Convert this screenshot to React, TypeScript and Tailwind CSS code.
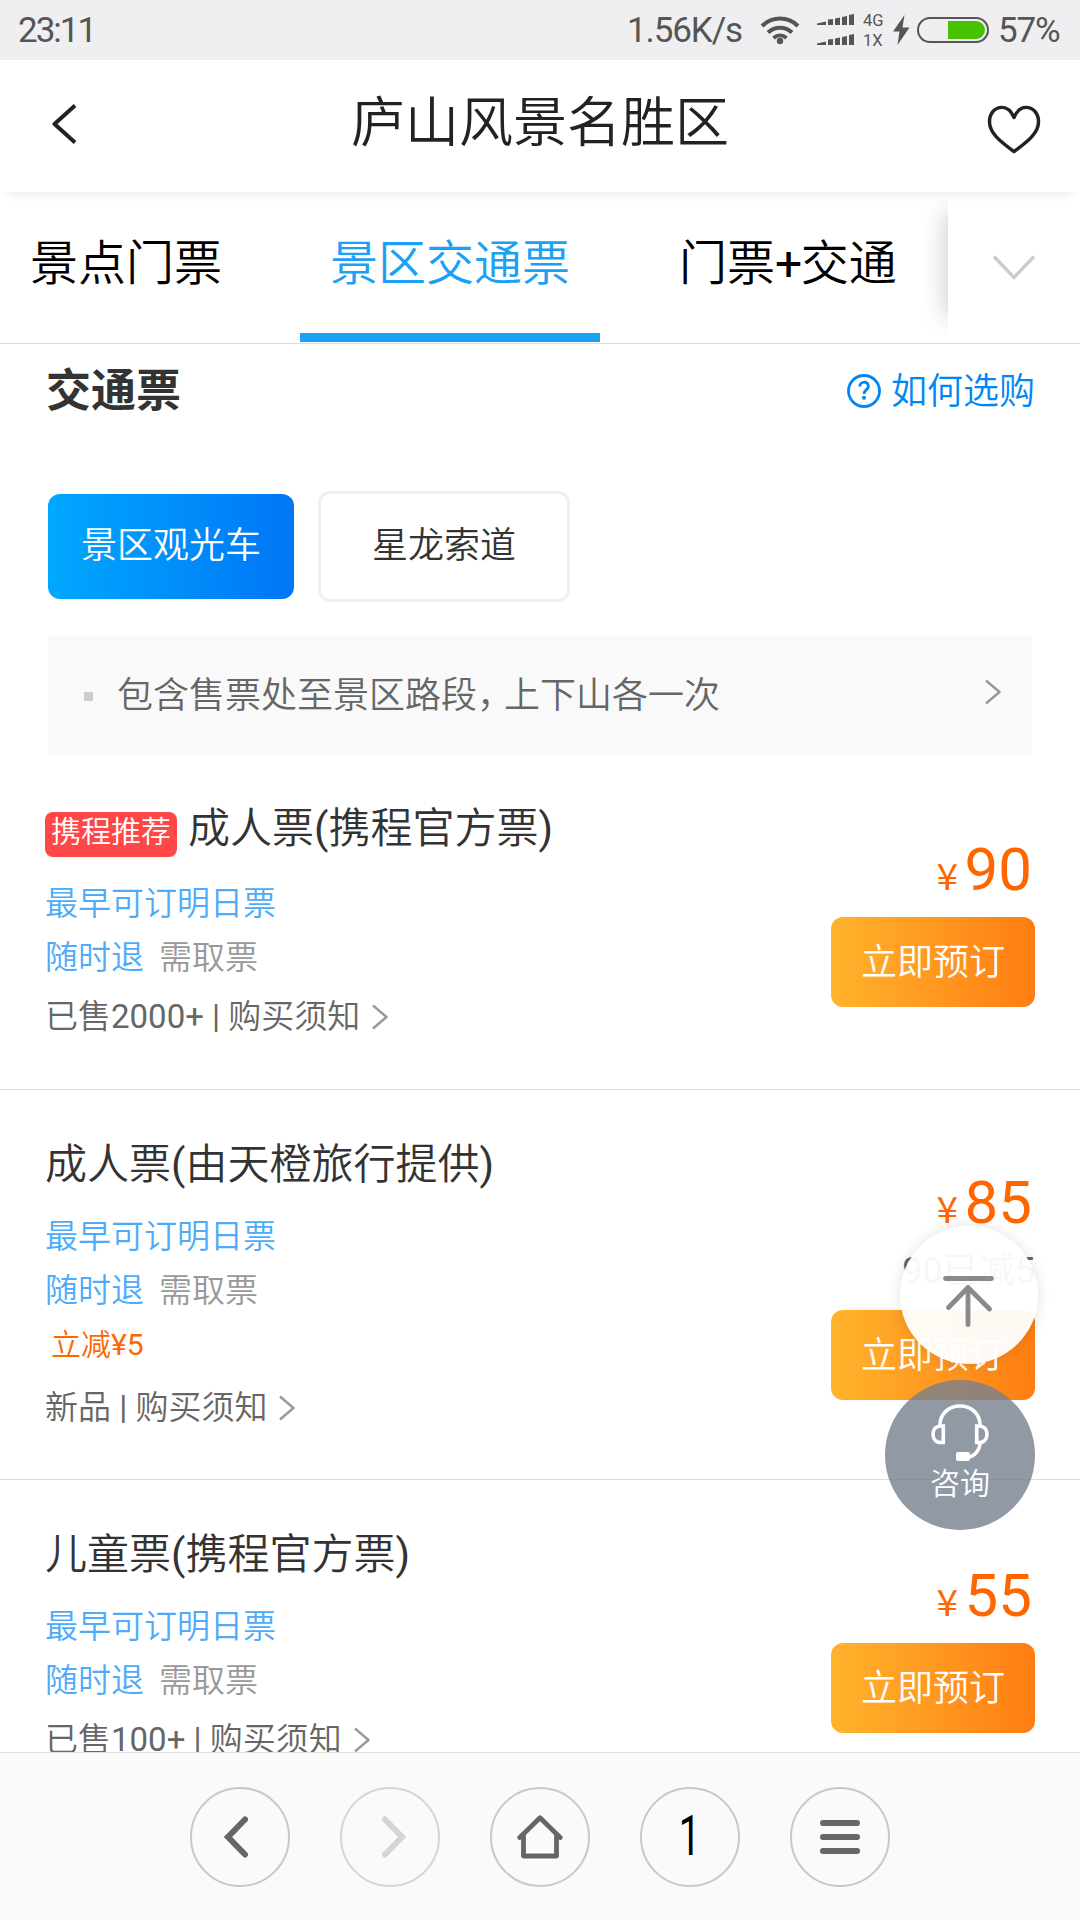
import clsx from 'clsx'

type Ticket = {
  title: string
  /** Red label in front of the title. */
  badge?: string
  sold: string
  price: number
  /** Small orange promo line. */
  promo?: string
  /** Grey line between the price and the button. */
  saved?: string
  priceClass: string
}

const TICKETS: Ticket[] = [
  { title: '成人票(携程官方票)', badge: '携程推荐', sold: '已售2000+', price: 90, priceClass: 'pt-[78px]' },
  { title: '成人票(由天橙旅行提供)', sold: '新品', price: 85, promo: '立减¥5', saved: '90已减5', priceClass: 'pt-[77px]' },
  { title: '儿童票(携程官方票)', sold: '已售100+', price: 55, priceClass: 'pt-[80px]' },
]

/* Latin runs at regular weight, Chinese stays at the inherited lighter one */
function Mixed({ text }: { text: string }) {
  return (
    <span className="whitespace-pre">
      {text.split(/([\x20-\xff]+)/).map((part, i) =>
        i % 2 ? (
          <span key={i} className="font-normal">
            {part}
          </span>
        ) : (
          part
        ),
      )}
    </span>
  )
}

function Signal() {
  return (
    <svg width="38" height="12" viewBox="0 0 38 12" fill="#555" aria-hidden="true">
      <path d="M0 11V9.5L9 7.5V11Z M11 11V5.5L16 5V11Z M18 11V4.5L23 3.5V11Z M25 11V3L30 2V11Z M32 11V1L37 0V11Z" />
    </svg>
  )
}

function StatusBar() {
  return (
    <div className="flex h-[60px] shrink-0 items-center bg-[#efeff1] pl-[18px] pr-[18px] text-[35px] leading-none text-[#555]">
      <span className="w-[76px] whitespace-nowrap pt-px tracking-[-2px]">23:11</span>
      <span className="ml-auto whitespace-nowrap pt-px tracking-[-1.1px]">1.56K/s</span>
      <svg className="ml-[18px]" width="40" height="30" viewBox="0 0 40 30" fill="none" stroke="#555" strokeWidth="4" aria-hidden="true">
        <path d="M2 11C12 1 28 1 38 11" />
        <path d="M8 17.5C15 11 25 11 32 17.5" />
        <path d="M13.5 23C17.5 19.5 22.5 19.5 26.5 23" />
        <circle cx="20" cy="26" r="3.2" fill="#555" stroke="none" />
      </svg>
      <div className="ml-[17px] flex flex-col gap-2">
        <Signal />
        <Signal />
      </div>
      <div className="ml-2 mt-px flex w-[24px] flex-col gap-1 text-[16.5px] leading-4">
        <span>4G</span>
        <span>1X</span>
      </div>
      <svg className="ml-[6px]" width="17" height="30" viewBox="0 0 17 30" fill="#555" aria-hidden="true">
        <path d="M11.5 0L0 16.5H6.5L4.5 30L16.5 12.5H9.5Z" />
      </svg>
      <div className="ml-[7px] flex h-[26px] w-[72px] justify-end rounded-full border-2 border-[#555] p-[2px]">
        <div className="h-[18px] w-[37px] rounded-r-full bg-[#47c200]" />
      </div>
      <span className="ml-[9px] w-[64px] whitespace-nowrap pt-px tracking-[-1.2px]">57%</span>
    </div>
  )
}

function Header() {
  return (
    <header className="relative z-10 flex h-[132px] shrink-0 items-center justify-between bg-white pl-[52px] pr-[39px] shadow-[0_6px_10px_-6px_rgba(0,0,0,0.12)]">
      <svg className="-mt-1 w-[54px]" width="54" height="42" viewBox="0 0 54 42" fill="none" stroke="#222" strokeWidth="4" aria-hidden="true">
        <path d="M23 2.5L2.5 21L23 39.5" strokeLinejoin="round" />
      </svg>
      <h1 className="-ml-[13px] -mt-1 text-[54px] font-[350] leading-none text-[#222]">庐山风景名胜区</h1>
      <svg className="mt-[5px]" width="54" height="50" viewBox="0 0 56 52" fill="none" stroke="#222" strokeWidth="3.6" strokeLinejoin="round" aria-hidden="true">
        <path d="M28 14C24.5 6 20 3.5 15.5 3.5C7.5 3.5 2.5 10.5 2.5 18.5C2.5 30 13 38.5 28 49.5C43 38.5 53.5 30 53.5 18.5C53.5 10.5 48.5 3.5 40.5 3.5C36 3.5 31.5 6 28 14Z" />
      </svg>
    </header>
  )
}

function Tabs() {
  return (
    <nav className="flex h-[152px] shrink-0 overflow-hidden border-b border-[#ddd] bg-white text-[48px] font-[350] leading-[143px] text-black">
      <div className="w-[300px] pl-[30px]">景点门票</div>
      <div className="w-[300px] border-b-[9px] border-[#1aa0f4] text-center text-[#1aa0f4] mb-px">景区交通票</div>
      <div className="w-[348px] whitespace-nowrap pl-[79px]">
        门票<span className="font-normal tracking-[-1.5px]">+</span>交通
      </div>
      <div className="relative my-2 flex flex-1 items-center justify-center bg-white">
        <div className="absolute inset-y-0 right-full w-[40px] overflow-hidden">
          <div className="absolute left-full top-[12px] h-[104px] w-10 shadow-[0_0_28px_rgba(0,0,0,0.24)]" />
        </div>
        <svg width="42" height="26" viewBox="0 0 42 26" fill="none" stroke="#ccc" strokeWidth="3.4" aria-hidden="true">
          <path d="M1 1.5L21 22.5L41 1.5" />
        </svg>
      </div>
    </nav>
  )
}

function Arrow({ className }: { className?: string }) {
  return (
    <svg className={className} width="16" height="26" viewBox="0 0 16 26" fill="none" stroke="#999" strokeWidth="2.4" aria-hidden="true">
      <path d="M1 1.5L14.5 13L1 24.5" strokeLinejoin="round" />
    </svg>
  )
}

function Intro() {
  return (
    <section className="h-[412px] shrink-0 px-[46px] font-[350]">
      <div className="flex h-[94px] items-center justify-between">
        <h2 className="pt-px text-[45px] font-bold leading-none text-[#333]">交通票</h2>
        <div className="flex items-center gap-[10px] pt-0.5 text-[36px] leading-none text-[#0086f6]">
          <svg className="-mt-0.5" width="34" height="34" viewBox="0 0 34 34" fill="none" stroke="currentColor" strokeWidth="2.8" aria-hidden="true">
            <circle cx="17" cy="17" r="15.5" />
            <path d="M12.8 12.5C13 6.8 21.4 6.8 21.4 12.2C21.4 15.8 17 15.5 17 20" strokeWidth="2.8" />
            <circle cx="17" cy="23.8" r="2" fill="currentColor" stroke="none" />
          </svg>
          <span className="-mr-px">如何选购</span>
        </div>
      </div>
      <div className="mt-[53px] flex items-center gap-6 pl-0.5 text-[36px] leading-none">
        <button className="h-[105px] w-[246px] rounded-xl bg-linear-to-r/srgb from-[#00a8ff] to-[#0076f5] pb-px text-white">景区观光车</button>
        <button className="h-[111px] w-[252px] rounded-xl border-3 border-[#f0f0f0] pb-px text-[#333]">星龙索道</button>
      </div>
      <div className="mx-0.5 mt-[33px] flex h-[120px] items-center bg-[#f9f9f9] pl-9 pr-[31px] text-[36px] leading-none text-[#666]">
        <span className="mt-[3px] size-[9px] bg-[#ccc]" />
        <p className="ml-6 whitespace-nowrap pt-px">
          包含售票处至景区路段<span className="tracking-[-9px]">，</span>上下山各一次
        </p>
        <Arrow className="-mt-[6px] ml-auto" />
      </div>
    </section>
  )
}

function TicketItem({ ticket }: { ticket: Ticket }) {
  return (
    <article className="flex shrink-0 justify-between border-b border-[#ddd] pl-[45px] pr-[45px] font-[350]">
      <div className={clsx('pt-11 text-[33px] leading-[54px]', ticket.promo ? 'pb-11' : 'pb-[45px]')}>
        <div className={clsx('flex items-center whitespace-nowrap', ticket.badge ? 'h-[61px]' : 'h-[60px]')}>
          {ticket.badge && (
            <span className="mr-[11px] mt-[7px] h-[45px] w-[132px] rounded-lg bg-[#ff4747] text-center text-[30px] leading-[40px] text-white">
              {ticket.badge}
            </span>
          )}
          <h3 className={clsx('text-[42px] leading-none text-[#333]', ticket.badge ? '-mt-1' : 'pt-px')}>
            <Mixed text={ticket.title} />
          </h3>
        </div>
        <p className="mt-4 text-[#4dabf9]">最早可订明日票</p>
        <p className="flex gap-[15px]">
          <span className="text-[#4dabf9]">随时退</span>
          <span className="text-[#999]">需取票</span>
        </p>
        {ticket.promo && (
          <p className="pl-1.5 text-[30px] text-[#ff6600]">
            <Mixed text={ticket.promo} />
          </p>
        )}
        <p className={clsx('flex items-center whitespace-nowrap text-[#666]', ticket.promo ? 'mt-[9px]' : 'mt-[5px]')}>
          <Mixed text={`${ticket.sold} | 购买须知`} />
          <Arrow className="-mt-px ml-[12px]" />
        </p>
      </div>
      <div className={clsx('flex w-[204px] flex-col items-end', ticket.priceClass)}>
        <p className="h-[72px] pr-[3px] text-[60px] font-normal leading-[72px] text-[#ff6600]">
          <span className="mr-[7px] inline-block origin-right scale-x-108 font-['Noto_Sans_CJK_SC'] text-[36px] leading-none">¥</span>
          {ticket.price}
        </p>
        {ticket.saved && (
          <p className="mb-px mt-[5px] h-[54px] text-[36px] leading-[54px] text-[#666]">
            <Mixed text={ticket.saved} />
          </p>
        )}
        <button className="mt-[11px] h-[90px] w-full rounded-xl bg-linear-to-r/srgb from-[#ffb42c] to-[#ff7d13] pt-0.5 text-[36px] leading-none text-white">
          立即预订
        </button>
      </div>
    </article>
  )
}

function FloatingButtons() {
  return (
    <>
      <button className="absolute left-[900px] top-[1226px] flex size-[138px] items-center justify-center rounded-full bg-white/95 shadow-[0_0_14px_rgba(0,0,0,0.12)]" aria-label="返回顶部">
        <svg className="mt-[13px]" width="54" height="54" viewBox="0 0 54 54" fill="none" stroke="#8a8a8a" strokeWidth="4.8" strokeLinecap="round" strokeLinejoin="round" aria-hidden="true">
          <path d="M3.5 3.5H49.5" />
          <path d="M26 13V49.5" />
          <path d="M6.5 32.5L26 12.5L47.5 34" />
        </svg>
      </button>
      <button className="absolute left-[885px] top-[1380px] flex size-[150px] flex-col items-center rounded-full bg-[#757f8e]/80 pt-6 text-[30px] font-[350] leading-[40px] text-white">
        <svg width="58" height="58" viewBox="0 0 58 58" fill="none" stroke="#fff" strokeWidth="3.6" aria-hidden="true">
          <path d="M9 21C9 10 17.5 2 29 2S49 10 49 21" />
          <path d="M12.3 22V38.5H10C5 38.5 2 35 2 30.2S5 22 10 22Z" />
          <path d="M45.7 22V38.5H48C53 38.5 56 35 56 30.2S53 22 48 22Z" />
          <path d="M49 38C49 46 44 52.5 36 53.5" />
          <rect x="25" y="48" width="14" height="9" rx="2" fill="#fff" stroke="none" />
        </svg>
        <span className="mt-0.5">咨询</span>
      </button>
    </>
  )
}

function BottomBar() {
  const circle = 'flex size-[100px] items-center justify-center rounded-full border-2 border-[#c8c8c8]'

  return (
    <footer className="z-10 flex h-[168px] shrink-0 items-center justify-center gap-[50px] border-t border-[#ddd] bg-[#fafafa]">
      <button className={circle} aria-label="后退">
        <svg className="-ml-2" width="26" height="42" viewBox="0 0 26 42" fill="none" stroke="#666" strokeWidth="6" strokeLinecap="round" aria-hidden="true">
          <path d="M22 3.5L5 21L22 38.5" />
        </svg>
      </button>
      <button className="flex size-[100px] items-center justify-center rounded-full border-2 border-[#d5d5d5]" aria-label="前进">
        <svg className="ml-2" width="26" height="42" viewBox="0 0 26 42" fill="none" stroke="#d5d5d5" strokeWidth="6" strokeLinecap="round" aria-hidden="true">
          <path d="M4 3.5L21 21L4 38.5" />
        </svg>
      </button>
      <button className={circle} aria-label="主页">
        <svg width="46" height="46" viewBox="0 0 46 46" fill="none" stroke="#666" strokeWidth="4.8" strokeLinecap="round" strokeLinejoin="round" aria-hidden="true">
          <path d="M2.8 23.5L23 3.8L43.2 23.5" />
          <path d="M6.5 21V42H39.5V21" strokeLinecap="butt" />
        </svg>
      </button>
      <button className={clsx(circle, 'text-[55px] leading-none text-black')}>
        <span className="mr-px inline-block scale-x-70">1</span>
      </button>
      <button className={circle} aria-label="菜单">
        <svg width="40" height="34" viewBox="0 0 40 34" stroke="#666" strokeWidth="6" strokeLinecap="round" aria-hidden="true">
          <path d="M3 3H37M3 17H37M3 31H37" />
        </svg>
      </button>
    </footer>
  )
}

export default function App() {
  return (
    <div className="relative flex h-[1920px] w-[1080px] flex-col overflow-hidden bg-white font-[Roboto,'Noto_Sans_CJK_SC',sans-serif]">
      <StatusBar />
      <Header />
      <Tabs />
      <main className="flex min-h-0 flex-1 flex-col overflow-hidden">
        <Intro />
        {TICKETS.map((ticket) => (
          <TicketItem key={ticket.title} ticket={ticket} />
        ))}
      </main>
      <FloatingButtons />
      <BottomBar />
    </div>
  )
}
